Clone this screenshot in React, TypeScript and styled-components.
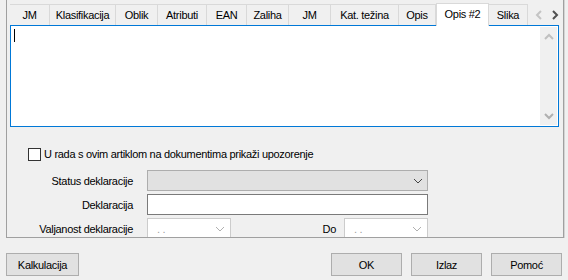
import React from "react";
import styled, { createGlobalStyle } from "styled-components";

const Global = createGlobalStyle`
  html, body { margin: 0; padding: 0; background: #f0f0f0; }
  body {
    font-family: "Liberation Sans", Arial, sans-serif;
    font-size: 11px;
    letter-spacing: -0.3px;
    color: #000;
  }
`;

const Root = styled.div`
  width: 568px;
  height: 280px;
  background: #f0f0f0;
  display: flex;
  flex-direction: column;
  overflow: hidden;
`;

const Frame = styled.div`
  margin-left: 6px;
  width: 556px;
  height: 237px;
  border-left: 1px solid #a0a0a0;
  border-right: 1px solid #a0a0a0;
  border-bottom: 1px solid #a0a0a0;
  box-shadow: 1px 0 0 #d4d4d4;
  display: flex;
  flex-direction: column;
  overflow: hidden;
  flex: none;
`;

const TabStrip = styled.div`
  height: 25px;
  display: flex;
  align-items: flex-end;
  padding-left: 3px;
  flex: none;
`;

const Tab = styled.div<{ $w: number; $active?: boolean }>`
  width: ${(p) => p.$w}px;
  box-sizing: border-box;
  height: ${(p) => (p.$active ? 23 : 21)}px;
  border-top: 1px solid #d9d9d9;
  border-right: 1px solid #d9d9d9;
  border-left: ${(p) => (p.$active ? "1px solid #d9d9d9" : "none")};
  background: ${(p) => (p.$active ? "#ffffff" : "#f0f0f0")};
  display: flex;
  align-items: ${(p) => (p.$active ? "flex-start" : "center")};
  padding-top: ${(p) => (p.$active ? 3 : 0)}px;
  justify-content: center;
  white-space: nowrap;
  flex: none;
  position: relative;
  ${(p) => (p.$active ? "margin-bottom: -1px; z-index: 1;" : "")}
`;

const TabLabel = styled.span`
  line-height: 14px;
`;

const Arrows = styled.div`
  display: flex;
  align-items: center;
  height: 21px;
  gap: 5px;
  margin-left: 5px;
  flex: none;
`;

const ArrowBtn = styled.div`
  width: 11px;
  height: 14px;
  display: flex;
  align-items: center;
  justify-content: center;
`;

const TextArea = styled.div`
  margin-left: 3px;
  width: 549px;
  height: 102px;
  box-sizing: border-box;
  border: 1px solid #0078d7;
  background: #fff;
  display: flex;
  flex: none;
`;

const TextBody = styled.div`
  flex: 1;
  padding: 3px 0 0 3px;
`;

const Caret = styled.div`
  width: 1px;
  height: 13px;
  background: #000;
`;

const ScrollBar = styled.div`
  width: 17px;
  margin: 1px 1px 1px 0;
  background: #f0f0f0;
  display: flex;
  flex-direction: column;
  justify-content: space-between;
  align-items: center;
  padding: 6px 0 5px;
`;

const CheckRow = styled.div`
  margin-top: 20px;
  margin-left: 21px;
  display: flex;
  align-items: center;
  height: 14px;
  flex: none;
`;

const CheckBox = styled.div`
  width: 13px;
  height: 13px;
  box-sizing: border-box;
  border: 1px solid #333;
  background: #fff;
  margin-right: 3px;
`;

const Form = styled.div`
  margin-top: 9px;
  display: grid;
  grid-template-columns: 126px 281px;
  column-gap: 14px;
  row-gap: 3px;
  flex: none;
`;

const Label = styled.div`
  height: 21px;
  display: flex;
  align-items: center;
  justify-content: flex-end;
  white-space: nowrap;
`;

const Combo = styled.div`
  height: 21px;
  box-sizing: border-box;
  border: 1px solid #adadad;
  background: #e1e1e1;
  display: flex;
  align-items: center;
  justify-content: flex-end;
  padding-right: 4px;
`;

const Input = styled.div`
  height: 21px;
  box-sizing: border-box;
  border: 1px solid #7a7a7a;
  background: #fff;
`;

const DateRow = styled.div`
  display: flex;
  align-items: flex-start;
  height: 21px;
`;

const DatePicker = styled.div`
  width: 84px;
  height: 21px;
  box-sizing: border-box;
  border: 1px solid #cccccc;
  background: #fff;
  display: flex;
  align-items: center;
  justify-content: space-between;
  padding: 0 5px 0 9px;
  color: #a0a0a0;
  flex: none;
`;

const DoLabel = styled.div`
  margin-left: auto;
  margin-right: 8px;
  height: 21px;
  display: flex;
  align-items: center;
`;

const ButtonBar = styled.div`
  margin-top: 15px;
  display: flex;
  padding: 0 6px;
  gap: 9px;
  flex: none;
`;

const Button = styled.div<{ $w: number }>`
  width: ${(p) => p.$w}px;
  height: 23px;
  box-sizing: border-box;
  border: 1px solid #adadad;
  background: #e1e1e1;
  display: flex;
  align-items: center;
  justify-content: center;
  flex: none;
`;

const Spacer = styled.div`
  flex: 1;
`;

type Dir = "down" | "up" | "left" | "right";

const Chevron = ({ color = "#333", dir = "down", weight = 1 }: { color?: string; dir?: Dir; weight?: number }) => {
  const d =
    dir === "down"
      ? "M1 2 L5 6 L9 2"
      : dir === "up"
      ? "M1 6 L5 2 L9 6"
      : dir === "left"
      ? "M6 1 L2 5 L6 9"
      : "M2 1 L6 5 L2 9";
  const horiz = dir === "left" || dir === "right";
  const w = horiz ? 8 : 10;
  const h = horiz ? 10 : 8;
  return (
    <svg width={w} height={h} viewBox={`0 0 ${w} ${h}`}>
      <path d={d} fill="none" stroke={color} strokeWidth={weight} />
    </svg>
  );
};

const tabs: [string, number][] = [
  ["JM", 40],
  ["Klasifikacija", 66],
  ["Oblik", 42],
  ["Atributi", 49],
  ["EAN", 40],
  ["Zaliha", 42],
  ["JM", 42],
  ["Kat. težina", 68],
  ["Opis", 37],
  ["Opis #2", 53],
  ["Slika", 39],
];

export default function App() {
  return (
    <Root>
      <Global />
      <Frame>
        <TabStrip>
          {tabs.map(([t, w], i) => (
            <Tab key={i} $w={w} $active={t === "Opis #2"}>
              <TabLabel>{t}</TabLabel>
            </Tab>
          ))}
          <Arrows>
            <ArrowBtn>
              <Chevron dir="left" color="#c4c4c4" weight={2} />
            </ArrowBtn>
            <ArrowBtn>
              <Chevron dir="right" color="#505050" weight={2} />
            </ArrowBtn>
          </Arrows>
        </TabStrip>
        <TextArea>
          <TextBody>
            <Caret />
          </TextBody>
          <ScrollBar>
            <Chevron dir="up" color="#c0c0c0" weight={2} />
            <Chevron dir="down" color="#b0b0b0" weight={2} />
          </ScrollBar>
        </TextArea>
        <CheckRow>
          <CheckBox />
          <span>U rada s ovim artiklom na dokumentima prikaži upozorenje</span>
        </CheckRow>
        <Form>
          <Label>Status deklaracije</Label>
          <Combo>
            <Chevron color="#444" />
          </Combo>
          <Label>Deklaracija</Label>
          <Input />
          <Label>Valjanost deklaracije</Label>
          <DateRow>
            <DatePicker>
              <span>. .</span>
              <Chevron color="#b0b0b0" />
            </DatePicker>
            <DoLabel>Do</DoLabel>
            <DatePicker>
              <span>. .</span>
              <Chevron color="#b0b0b0" />
            </DatePicker>
          </DateRow>
        </Form>
      </Frame>
      <ButtonBar>
        <Button $w={73}>Kalkulacija</Button>
        <Spacer />
        <Button $w={71}>OK</Button>
        <Button $w={71}>Izlaz</Button>
        <Button $w={71}>Pomoć</Button>
      </ButtonBar>
    </Root>
  );
}
